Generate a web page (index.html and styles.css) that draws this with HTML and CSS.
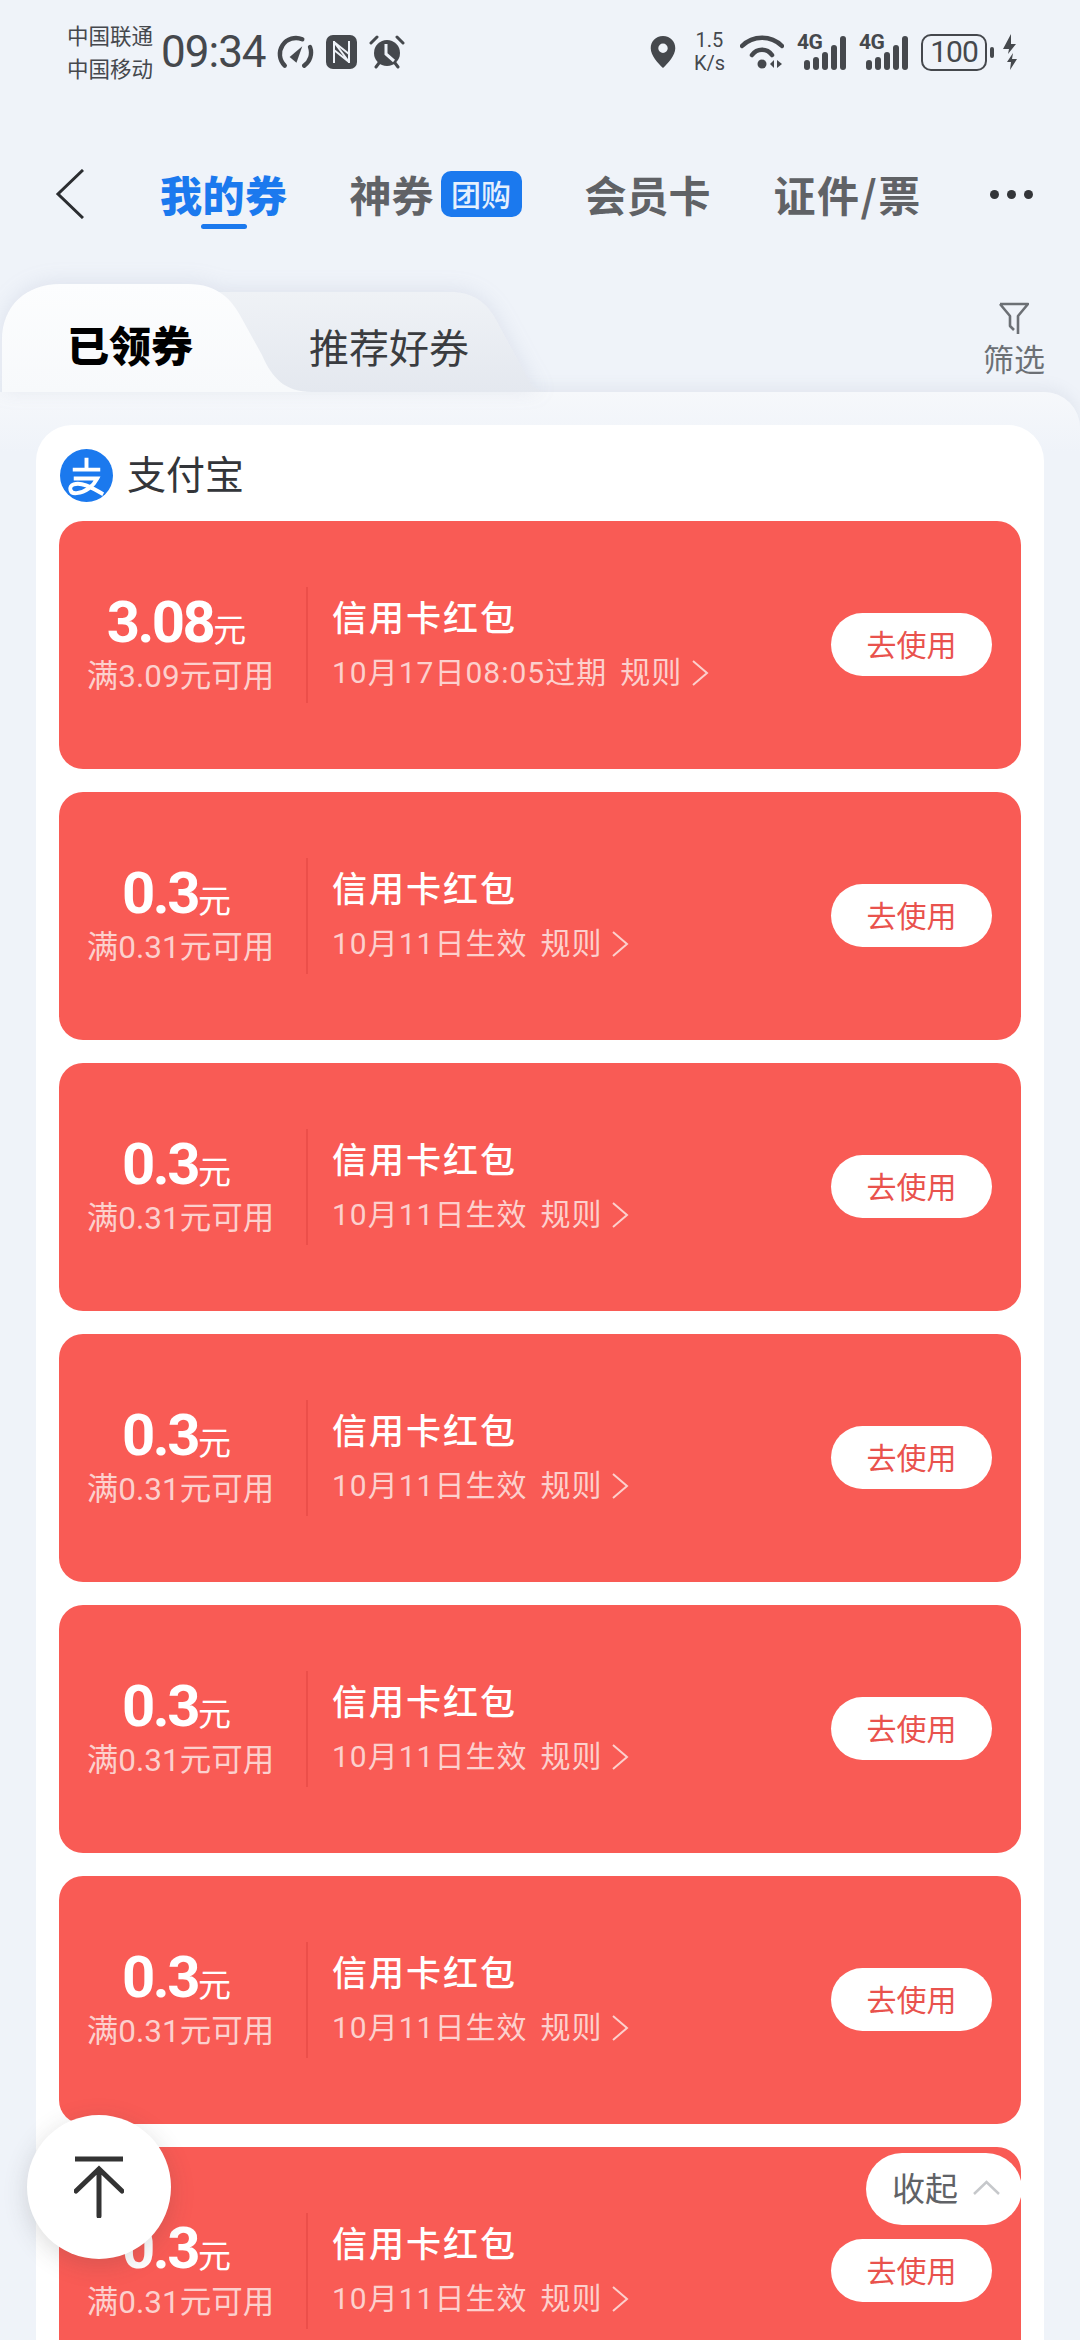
FILE: index.html
```html
<!DOCTYPE html>
<html lang="zh-CN">
<head>
    <meta charset="UTF-8">
    <meta name="viewport" content="width=device-width, initial-scale=1.0">
    <title>我的券</title>
    <link rel="stylesheet" href="styles.css">
</head>
<body>
    <div class="page">
        <div class="statusbar">
            <div class="carriers">
                <span>中国联通</span>
                <span>中国移动</span>
            </div>
            <span class="clock">09:34</span>
            <svg class="sb-speedo" width="39" height="36" viewBox="0 0 40 36"><path d="M10 32A16.5 16.5 0 0 1 28 5" fill="none" stroke="#45484d" stroke-width="4.5" stroke-linecap="round"/><path d="M36 13A16.5 16.5 0 0 1 30 32" fill="none" stroke="#45484d" stroke-width="4.5" stroke-linecap="round"/><path d="M15 23L28 12L22 29Z" fill="#45484d"/></svg>
            <svg class="sb-icon" width="31" height="34" viewBox="0 0 31 34"><rect x="0" y="0" width="31" height="34" rx="7" fill="#45484d"/><path d="M8 6V28M23 6V28M8 7L23 27M8 15L23 27M8 7L23 19" stroke="#eff3f9" stroke-width="2" fill="none"/></svg>
            <svg class="sb-icon" width="36" height="36" viewBox="0 0 36 36"><circle cx="18" cy="19" r="13" fill="#45484d"/><path d="M17 10V20L25 27" stroke="#eff3f9" stroke-width="3" fill="none"/><path d="M2 9L8 3M34 9L28 3M7 33L10 29M29 33L26 29" stroke="#45484d" stroke-width="3" stroke-linecap="round"/></svg>
            <div class="sb-right">
                <svg width="28" height="34" viewBox="0 0 28 36"><path fill-rule="evenodd" d="M14 1C6 1 1 7 1 14C1 22 9 30 14 35C19 30 27 22 27 14C27 7 22 1 14 1ZM14 9A5 5 0 1 1 14 19A5 5 0 0 1 14 9Z" fill="#45484d"/></svg>
                <div class="speed"><span>1.5</span><span>K/s</span></div>
                <svg class="wifi" width="44" height="34" viewBox="0 0 44 34"><path d="M2 11C13 0 31 0 42 11" fill="none" stroke="#45484d" stroke-width="4.5" stroke-linecap="round"/><path d="M12 20C17 13 27 13 32 20" fill="none" stroke="#45484d" stroke-width="4.5" stroke-linecap="round"/><circle cx="22" cy="29" r="4.5" fill="#45484d"/><path d="M34 25V33L30 29ZM37 25V33L42 29Z" fill="#45484d"/></svg>
                <div class="signal">
                    <span class="sig-label">4G</span>
                    <div class="bars"><i class="b1"></i><i class="b2"></i><i class="b3"></i><i class="b4"></i><i class="b5"></i></div>
                </div>
                <div class="signal">
                    <span class="sig-label">4G</span>
                    <div class="bars"><i class="b1"></i><i class="b2"></i><i class="b3"></i><i class="b4"></i><i class="b5"></i></div>
                </div>
                <div class="battery"><span class="batt-body">100</span><i class="batt-tip"></i></div>
                <svg class="bolt" width="16" height="36" viewBox="0 0 16 36"><path d="M9 0L1 15H7L6 20L14 10H9ZM11 19L5 28H9L8 36L15 25H10Z" fill="#45484d"/></svg>
            </div>
        </div>

        <div class="topnav">
            <svg class="back" width="29" height="50" viewBox="0 0 29 50"><path d="M28 1L3 25L28 49" fill="none" stroke="#2b2d31" stroke-width="3"/></svg>
            <div class="nav-tab active">我的券</div>
            <div class="nav-tab shen">神券<span class="tuan">团购</span></div>
            <div class="nav-tab member">会员卡</div>
            <div class="nav-tab cert">证件/票</div>
            <div class="more"><i></i><i></i><i></i></div>
        </div>

        <div class="tabs">
            <svg class="tab-shapes" width="560" height="108" viewBox="0 0 560 108">
                <defs>
                    <linearGradient id="tabOff" x1="0" y1="0" x2="0" y2="1"><stop offset="0" stop-color="#eff2f6"/><stop offset="1" stop-color="#e4e8ef"/></linearGradient>
                    <linearGradient id="tabOn" x1="0" y1="0" x2="0" y2="1"><stop offset="0" stop-color="#fcfdfe"/><stop offset="1" stop-color="#f7f9fb"/></linearGradient>
                </defs>
                <path d="M200 108V8H450C473 8 485 18 494 32L525 89C529 98 535 108 547 108Z" fill="url(#tabOff)"/>
                <path d="M2 108V56C2 22 26 0 60 0H188C218 0 232 16 241 33L262 71C272 94 285 108 312 108Z" fill="url(#tabOn)"/>
            </svg>
            <div class="tab tab-on">已领券</div>
            <div class="tab tab-off">推荐好券</div>
            <div class="filter">
                <svg width="30" height="33" viewBox="0 0 30 33"><path d="M1 2H29L19 14V32M1 2L11 14V24L15 28" fill="none" stroke="#6c7075" stroke-width="2.6" stroke-linejoin="round"/></svg>
                <span>筛选</span>
            </div>
        </div>

        <div class="sheet">
            <div class="card">
                <div class="brand">
                    <svg width="53" height="53" viewBox="0 0 54 54"><circle cx="27" cy="27" r="27" fill="#1b79ee"/><path d="M27 9V21M13 21H41M14 30H38C34 38 26 44 17 45C10 46 8 38 14 36C24 33 36 42 44 46" fill="none" stroke="#fff" stroke-width="4"/></svg>
                    <span>支付宝</span>
                </div>
                <div class="coupon-list" id="coupons"></div>
            </div>
        </div>

        <div class="to-top">
            <svg width="50" height="62" viewBox="0 0 50 62"><path d="M1 3H49" stroke="#333" stroke-width="5"/><path d="M2 35L25 13L48 35M25 14V60" fill="none" stroke="#333" stroke-width="5" stroke-linecap="round"/></svg>
        </div>
        <div class="collapse">收起<svg width="27" height="15" viewBox="0 0 27 15"><path d="M1 14L13.5 2L26 14" fill="none" stroke="#c6c8cb" stroke-width="2.5"/></svg></div>
    </div>

    <script>
        const coupons = [
            { amount: '3.08', limit: '满3.09元可用', date: '10月17日08:05过期' },
            { amount: '0.3', limit: '满0.31元可用', date: '10月11日生效' },
            { amount: '0.3', limit: '满0.31元可用', date: '10月11日生效' },
            { amount: '0.3', limit: '满0.31元可用', date: '10月11日生效' },
            { amount: '0.3', limit: '满0.31元可用', date: '10月11日生效' },
            { amount: '0.3', limit: '满0.31元可用', date: '10月11日生效' },
            { amount: '0.3', limit: '满0.31元可用', date: '10月11日生效' }
        ];

        document.getElementById('coupons').innerHTML = coupons.map(c => `
            <div class="coupon">
                <div class="c-left">
                    <div class="c-amount">${c.amount}<small>元</small></div>
                    <div class="c-limit">${c.limit}</div>
                </div>
                <div class="c-mid">
                    <div class="c-title">信用卡红包</div>
                    <div class="c-sub">${c.date}<span class="c-rule">规则</span><svg width="17" height="26" viewBox="0 0 17 26"><path d="M1 1L15 13L1 25" fill="none" stroke="#fcd0cd" stroke-width="2"/></svg></div>
                </div>
                <div class="c-btn">去使用</div>
            </div>
        `).join('');
    </script>
</body>
</html>
```

FILE: styles.css
```css
* {
    box-sizing: border-box;
}
html, body {
    margin: 0;
    padding: 0;
}
body {
    font-family: "Noto Sans CJK SC", "Noto Sans", Roboto, sans-serif;
    background-color: #eff3f9;
}
.page {
    position: relative;
    width: 1080px;
    height: 2340px;
    overflow: hidden;
    background-color: #eff3f9;
}

/* status bar */
.statusbar {
    display: flex;
    align-items: center;
    height: 104px;
    padding: 0 62px 0 67px;
    color: #45484d;
}
.carriers {
    display: flex;
    flex-direction: column;
    padding-bottom: 2px;
    font-size: 21.5px;
    line-height: 33px;
}
.clock {
    font-family: Roboto, sans-serif;
    font-size: 44px;
    letter-spacing: -1px;
    margin-left: 8px;
    margin-right: 9px;
}
.sb-icon {
    margin-left: 12px;
}
.sb-right {
    display: flex;
    align-items: center;
    margin-left: auto;
    gap: 13px;
}
.speed {
    display: flex;
    flex-direction: column;
    align-items: center;
    font-family: Roboto, sans-serif;
    font-size: 20px;
    line-height: 23.5px;
    margin-left: 4px;
}
.wifi {
    margin-left: 2px;
}
.signal {
    position: relative;
    width: 49px;
    height: 36px;
}
.sig-label {
    position: absolute;
    left: 0;
    top: -3px;
    font-family: Roboto, sans-serif;
    font-size: 21px;
    font-weight: 700;
    letter-spacing: -0.5px;
    line-height: 22px;
}
.bars {
    position: absolute;
    right: 0;
    bottom: 0;
    display: flex;
    align-items: flex-end;
    gap: 3px;
}
.bars i {
    display: block;
    width: 6px;
    border-radius: 3px;
    background-color: #45484d;
}
.b1 { height: 10px; }
.b2 { height: 13px; }
.b3 { height: 18px; }
.b4 { height: 25px; }
.b5 { height: 34px; }
.battery {
    display: flex;
    align-items: center;
    gap: 3px;
}
.batt-body {
    width: 66px;
    height: 37px;
    border: 2.5px solid #45484d;
    border-radius: 10px;
    font-family: Roboto, sans-serif;
    font-size: 30px;
    letter-spacing: -1px;
    line-height: 32px;
    text-align: center;
}
.batt-tip {
    display: block;
    width: 4px;
    height: 11px;
    border-radius: 2px;
    background-color: #45484d;
}
.bolt {
    margin-left: -5px;
}

/* top nav */
.topnav {
    position: relative;
    height: 90px;
    margin-top: 45px;
    display: flex;
    align-items: center;
    font-size: 42px;
    font-weight: 700;
    color: #606266;
}
.back {
    margin-left: 55px;
}
.nav-tab {
    line-height: 50px;
}
.nav-tab.active {
    position: relative;
    margin-left: 76px;
    color: #1b79ee;
    font-weight: 900;
    letter-spacing: 0.5px;
}
.nav-tab.active::after {
    content: "";
    position: absolute;
    left: 41px;
    bottom: -10px;
    width: 46px;
    height: 5px;
    border-radius: 3px;
    background-color: #1b79ee;
}
.shen {
    display: flex;
    align-items: center;
    margin-left: 62px;
}
.tuan {
    width: 81px;
    height: 46px;
    margin-left: 7px;
    border-radius: 10px;
    background-color: #1b79ee;
    color: #e6f0fd;
    font-size: 30px;
    font-weight: 500;
    line-height: 45px;
    text-align: center;
}
.member {
    margin-left: 63px;
}
.cert {
    margin-left: 63px;
    letter-spacing: 1.5px;
}
.more {
    display: flex;
    gap: 8px;
    margin-left: 68px;
}
.more i {
    display: block;
    width: 9px;
    height: 9px;
    border-radius: 50%;
    background-color: #333539;
}

/* secondary tabs */
.tabs {
    position: relative;
    z-index: 1;
    height: 108px;
    margin-top: 45px;
    display: flex;
    padding-left: 67px;
}
.tab-shapes {
    position: absolute;
    left: 0;
    top: 0;
    filter: drop-shadow(0 -2px 10px rgba(110, 125, 160, 0.14));
}
.tab {
    position: relative;
    line-height: 58px;
}
.tab-on {
    padding-top: 31px;
    font-size: 42px;
    font-weight: 900;
    color: #000;
}
.tab-off {
    margin-left: 116px;
    padding-top: 33px;
    font-size: 40px;
    color: #3a3c40;
}
.filter {
    position: absolute;
    right: 35px;
    top: 18px;
    display: flex;
    flex-direction: column;
    align-items: center;
    color: #6c7075;
    font-size: 31px;
    line-height: 46px;
}

/* sheet + card */
.sheet {
    position: relative;
    padding: 33px 36px 0;
    background: linear-gradient(#f6f8fb, #eff3f9 60px);
    border-radius: 0 36px 0 0;
    box-shadow: 0 -6px 14px rgba(120, 130, 160, 0.09);
}
.card {
    padding: 0 23px;
    background-color: #fff;
    border-radius: 36px 36px 0 0;
}
.brand {
    display: flex;
    align-items: center;
    height: 96px;
    padding-bottom: 2px;
    font-size: 39px;
    color: #333539;
}
.brand svg {
    margin: 7px 0 0 1px;
}
.brand span {
    margin-left: 14px;
}
.coupon-list {
    display: flex;
    flex-direction: column;
    gap: 23px;
}
.coupon {
    display: flex;
    align-items: center;
    height: 248px;
    border-radius: 24px;
    background-color: #f95b55;
    color: #fff;
}
.c-left {
    width: 247px;
    margin-bottom: 2px;
    padding-right: 4px;
    text-align: center;
}
.c-amount {
    padding-right: 8px;
    font-family: Roboto, "Noto Sans CJK SC", sans-serif;
    font-size: 58px;
    font-weight: 700;
    letter-spacing: -2.5px;
    line-height: 60px;
}
.c-amount small {
    font-family: "Noto Sans CJK SC", sans-serif;
    font-size: 33px;
    font-weight: 400;
    letter-spacing: 0;
}
.c-limit {
    font-family: Roboto, "Noto Sans CJK SC", sans-serif;
    font-size: 31.5px;
    line-height: 38px;
    color: #fcd0cd;
}
.c-mid {
    flex: 1;
    height: 116px;
    padding: 4px 0 0 24px;
    border-left: 2px solid #ec4f4a;
}
.c-title {
    font-size: 35px;
    font-weight: 500;
    line-height: 50px;
    letter-spacing: 2px;
}
.c-sub {
    display: flex;
    align-items: center;
    margin-top: 7px;
    font-family: Roboto, "Noto Sans CJK SC", sans-serif;
    font-size: 30px;
    line-height: 50px;
    color: #fcd0cd;
    letter-spacing: 1px;
}
.c-rule {
    margin-left: 13px;
    margin-right: 10px;
}
.c-btn {
    width: 161px;
    height: 63px;
    margin: 0 29px 2px 0;
    border-radius: 32px;
    background-color: #fff;
    color: #e9524d;
    font-size: 30px;
    line-height: 61px;
    text-align: center;
}

/* floating buttons */
.to-top {
    position: absolute;
    z-index: 2;
    left: 27px;
    top: 2115px;
    width: 144px;
    height: 144px;
    display: flex;
    align-items: center;
    justify-content: center;
    border-radius: 50%;
    background-color: #fff;
    box-shadow: 0 6px 24px rgba(60, 60, 60, 0.18);
}
.collapse {
    position: absolute;
    z-index: 2;
    left: 866px;
    top: 2153px;
    width: 156px;
    height: 72px;
    display: flex;
    align-items: center;
    gap: 15px;
    padding: 0 0 4px 26px;
    border-radius: 36px;
    background-color: #fff;
    color: #606266;
    font-size: 33px;
}
```
